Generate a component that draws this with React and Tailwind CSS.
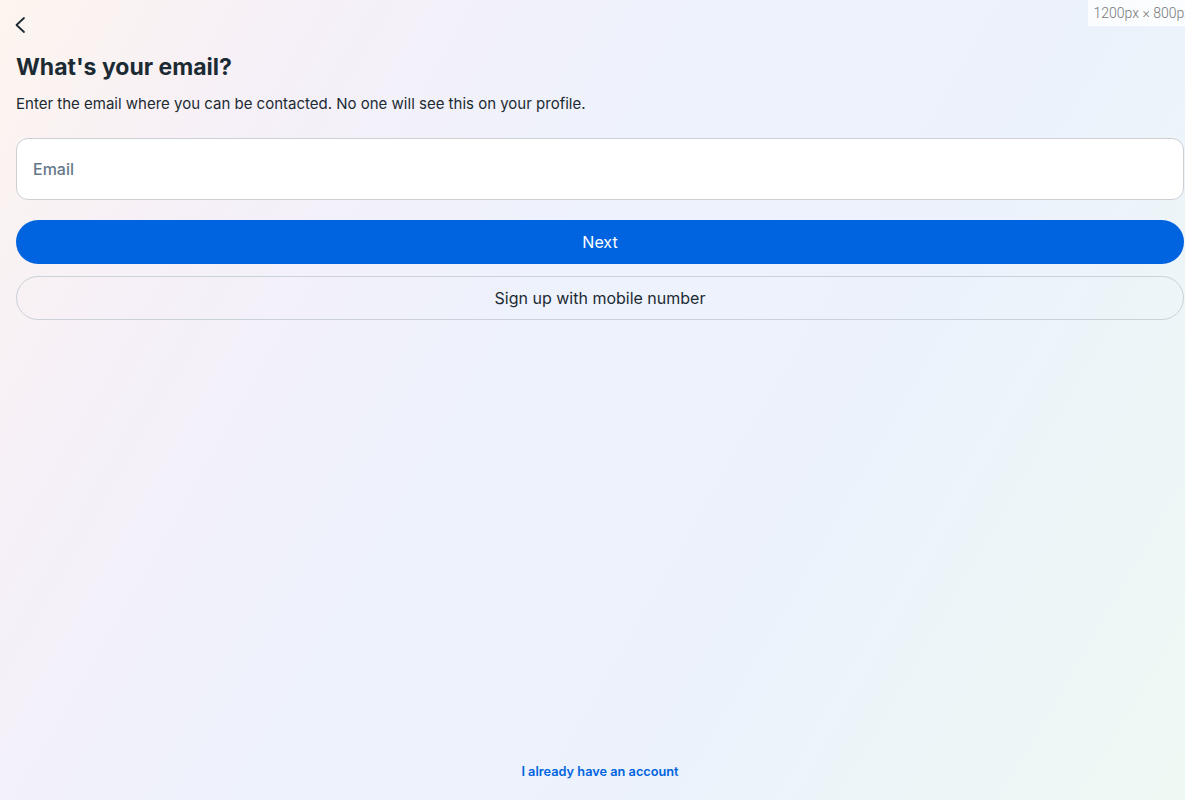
import React from 'react';

export default function App() {
  return (
    <div className="w-[1185px] h-[800px] overflow-hidden">
      <div
        className="relative flex h-[800px] w-[1200px] flex-col px-4 text-[#1c2b33] font-['Inter',_'Noto_Sans',_sans-serif] bg-[linear-gradient(120deg,#fdf5ee_0%,#f6f0f8_18%,#eef2fc_42%,#ecf2fc_66%,#eef9f3_100%)]"
      >
        {/* viewport badge */}
        <div className="absolute right-0 top-0 h-[26px] bg-white/80 pl-[6px] pr-[9px] pt-[4px] text-[14px] leading-[18px] text-[#777] font-['Roboto',_sans-serif] font-light">
          1200px × 800px
        </div>

        {/* back */}
        <button className="-ml-[9px] mt-[13px] h-6 w-6 shrink-0" aria-label="Back">
          <svg width="24" height="24" viewBox="0 0 24 24" fill="none">
            <path d="M17 5 L9.5 12 L17 19" stroke="#1c2b33" strokeWidth="1.8" strokeLinecap="round" strokeLinejoin="round" />
          </svg>
        </button>

        <h1 className="mt-[14px] text-[23px] font-bold leading-[32px]">What's your email?</h1>
        <p className="mt-[11px] text-[15px] leading-[20px]">
          Enter the email where you can be contacted. No one will see this on your profile.
        </p>

        <div className="mt-[24px] flex h-[62px] items-center rounded-[12px] border border-[#ccd0d5] bg-white px-4">
          <span className="text-[16px] font-medium text-[#65778a]">Email</span>
        </div>

        <button className="mt-[20px] h-[44px] rounded-full bg-[#0064e0] text-[16px] font-normal text-white">
          Next
        </button>
        <button className="mt-[12px] h-[44px] rounded-full border border-[#cbd2d9] text-[16px] font-normal text-[#1c2b33]">
          Sign up with mobile number
        </button>

        <div className="flex-1" />

        <div className="mb-[18px] text-center">
          <a className="text-[12.75px] font-semibold text-[#0064e0]" href="#">I already have an account</a>
        </div>
      </div>
    </div>
  );
}
